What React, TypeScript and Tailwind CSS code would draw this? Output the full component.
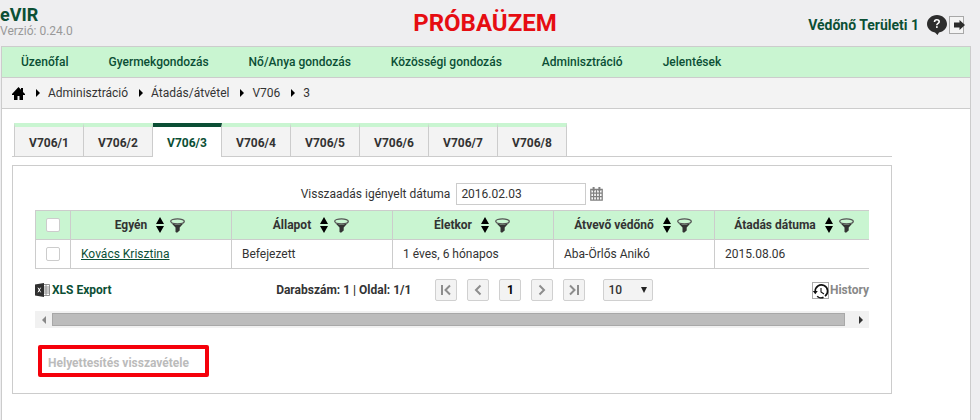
//dependencies
import { useState } from "react";

const menuItems = ["Üzenőfal", "Gyermekgondozás", "Nő/Anya gondozás", "Közösségi gondozás", "Adminisztráció", "Jelentések"];
const breadcrumbs = ["Adminisztráció", "Átadás/átvétel", "V706", "3"];
const tabs = ["V706/1", "V706/2", "V706/3", "V706/4", "V706/5", "V706/6", "V706/7", "V706/8"];
const columns = ["Egyén", "Állapot", "Életkor", "Átvevő védőnő", "Átadás dátuma"];
const rows = [
    { name: "Kovács Krisztina", status: "Befejezett", age: "1 éves, 6 hónapos", nurse: "Aba-Örlős Anikó", date: "2015.08.06" },
];

function HelpIcon() {
    return (
        <svg width="20" height="20" viewBox="0 0 20 20">
            <path d="M10 0C4.500 0 0 4 0 9c0 4.300 3.500 7.700 8 8.500l2.500 2.500 1.500-2.500c4.600-.8 8-4.200 8-8.500 0-5-4.500-9-10-9z" fill="#2d2d2d" />
            <path d="M7.500 7c0-1.500 1.100-2.200 2.300-2.200s2.400.7 2.400 2c0 1.600-2.400 1.700-2.400 3.400" fill="none" stroke="#fff" strokeWidth="1.600" />
            <rect x="9" y="11.200" width="1.700" height="1.700" fill="#fff" />
        </svg>
    )
}

function LogoutIcon() {
    return (
        <svg width="17" height="18" viewBox="0 0 17 18">
            <rect x=".5" y=".5" width="14" height="17" fill="#f4f4f4" stroke="#a8a8a8" />
            <path d="M5 6.500h5.500V4l5.500 5-5.500 5v-2.500H5z" fill="#2b2b2b" />
        </svg>
    )
}

function HomeIcon() {
    return (
        <svg width="13" height="13" viewBox="0 0 13 13">
            <path d="M6.500 0L0 7v1h2v5h3.500V9h2v4H11V8h2V7l-2-2.100V1H9v1.700z" fill="#000" />
        </svg>
    )
}

function CrumbArrow() {
    return (
        <svg width="4" height="8" viewBox="0 0 4 8">
            <path d="M0 0l4 4-4 4z" fill="#000" />
        </svg>
    )
}

function SortIcon() {
    return (
        <svg width="8" height="16" viewBox="0 0 8 16">
            <path d="M4 0l4 7H0zM4 16l4-7H0z" fill="#000" />
        </svg>
    )
}

function FilterIcon() {
    return (
        <svg width="15" height="15" viewBox="0 0 15 15">
            <path d="M.8 4.500L5.500 9.500V14l1.500.8 2.700-2.300v-3l4.500-5C12.500 6 10 6.500 7.500 6.500S2.500 6 .8 4.500z" fill="#333" />
            <ellipse cx="7.500" cy="3.300" rx="6.800" ry="2.500" fill="none" stroke="#555" strokeWidth="1.300" />
        </svg>
    )
}

function CalendarIcon() {
    return (
        <svg width="13" height="14" viewBox="0 0 13 14">
            <path d="M.8 2.500h11.400v10.700H.8zM.8 6.200h11.400M.8 9.700h11.400M3.600 2.500v10.700M6.500 2.500v10.700M9.400 2.500v10.700" fill="none" stroke="#808080" strokeWidth="1.300" />
            <path d="M3.600 0v4M9.400 0v4" stroke="#808080" strokeWidth="2" />
        </svg>
    )
}

function XlsIcon() {
    return (
        <svg width="15" height="14" viewBox="0 0 15 14">
            <path d="M8 1.500h6.500v11H8M8 4h6.500M8 6h6.500M8 8h6.500M8 10h6.500M11 1.500v11" fill="none" stroke="#888" strokeWidth=".9" />
            <path d="M0 1.500L9 0v14l-9-1.500z" fill="#2f2f2f" />
            <path d="M3 4.700l2.600 4.600M5.600 4.700L3 9.300" stroke="#fff" strokeWidth="1" />
        </svg>
    )
}

function HistoryIcon() {
    return (
        <svg width="17" height="17" viewBox="0 0 17 17">
            <rect x=".5" y=".5" width="16" height="16" fill="#fff" stroke="#aaa" />
            <path d="M3.200 9.500A6.200 6.200 0 1 1 13 14.200M5.200 14.200c1.500 1.600 4.500 2 6.300 1" fill="none" stroke="#111" strokeWidth="1.600" />
            <path d="M.8 9h5l-2.500 3.200z" fill="#111" />
            <path d="M9 6v4l3 2" fill="none" stroke="#111" strokeWidth="1.100" />
        </svg>
    )
}

function PagerButton({ label, path }: { label: string, path: string }) {
    return (
        <button aria-label={label} className="flex h-[22px] w-[22px] items-center justify-center rounded-xs border border-[#d0d0d0] bg-[#f3f3f3]">
            <svg width="12" height="12" viewBox="0 0 12 12">
                <path d={path} fill="none" stroke="#8d8d8d" strokeWidth="2" />
            </svg>
        </button>
    )
}

export default function App() {
    const [activeTab, setActiveTab] = useState("V706/3");
    const [date, setDate] = useState("2016.02.03");

    return (
        <div className="flex min-h-screen flex-col bg-[#eeeef0] font-['Roboto',sans-serif] text-[12px] text-[#333]">
            <header className="grid h-[46px] grid-cols-3">
                <div className="pt-1.5">
                    <h1 className="text-[18px] leading-[18px] font-bold text-[#0b4f35]">eVIR</h1>
                    <p className="leading-[14px] text-[#999]">Verzió: 0.24.0</p>
                </div>
                <p className="pt-1 pr-2.5 text-center text-[24px] leading-[38px] font-bold text-[#e60d12]">PRÓBAÜZEM</p>
                <div className="flex items-center justify-end pt-1 pr-[14px]">
                    <span className="mr-2 text-[14px] font-bold text-[#0b4f35]">Védőnő Területi 1</span>
                    <button aria-label="Súgó" className="mr-0.5"><HelpIcon /></button>
                    <button aria-label="Kilépés"><LogoutIcon /></button>
                </div>
            </header>

            <div className="mr-[9px] ml-px flex flex-1 flex-col border-x border-t border-[#ccc] bg-white">
                <nav className="flex h-[31px] items-center gap-10 border-b border-[#ccc] bg-[#c9f5d1] pl-[19px]">
                    {menuItems.map(item => <a key={item} href="#" className="font-medium text-[#0b4f35]">{item}</a>)}
                </nav>

                <nav className="flex h-[31px] items-center border-b border-[#ccc] bg-[#f3f3f3] pl-2.5" aria-label="Útvonal">
                    <a href="#" aria-label="Kezdőlap"><HomeIcon /></a>
                    {breadcrumbs.map(crumb => (
                        <span key={crumb} className="flex items-center">
                            <span className="mr-2 ml-[11px]"><CrumbArrow /></span>
                            <a href="#">{crumb}</a>
                        </span>
                    ))}
                </nav>

                <main className="mr-[78px] ml-2.5 pt-3.5">
                    <div role="tablist" className="flex border-b border-[#ccc] pl-0.5">
                        {tabs.map(tab => (
                            <button
                                key={tab}
                                role="tab"
                                aria-selected={tab === activeTab}
                                onClick={() => setActiveTab(tab)}
                                className={tab === activeTab
                                    ? "-mb-px h-[34px] w-[69px] border-t-4 border-r border-t-[#0b4f35] border-r-[#ccc] bg-white pt-0.5 font-bold text-[#0b4f35]"
                                    : "h-[33px] w-[69px] border-t-4 border-r border-t-[#c9f5d1] border-r-[#ccc] bg-[#f3f3f3] pt-0.5 font-bold first:w-[70px] first:border-l first:border-l-[#ccc]"}
                            >
                                {tab}
                            </button>
                        ))}
                    </div>

                    <section className="mt-2 border border-[#ccc] px-[22px] pt-[17px] pb-4">
                        <div className="flex items-center justify-center">
                            <label htmlFor="date" className="mr-1.5">Visszaadás igényelt dátuma</label>
                            <input id="date" value={date} onChange={e => setDate(e.target.value)} className="h-[22px] w-[130px] border border-[#ccc] bg-white px-1" />
                            <button aria-label="Naptár" className="ml-1"><CalendarIcon /></button>
                        </div>

                        <div className="mt-[5px] overflow-hidden">
                            <table className="w-[841px] table-fixed border-collapse">
                                <thead>
                                    <tr className="h-[29px] bg-[#c9f5d1]">
                                        <th className="w-[35px] border border-[#ccc]">
                                            <input type="checkbox" aria-label="Összes kijelölése" className="mx-auto block h-3.5 w-3.5 appearance-none rounded-xs border border-[#ccc] bg-white" />
                                        </th>
                                        {columns.map(column => (
                                            <th key={column} className="border border-[#ccc] p-0 pr-0.5">
                                                <div className="flex items-center justify-center">
                                                    <span className="font-bold">{column}</span>
                                                    <button aria-label={`Rendezés: ${column}`} className="mr-1.5 ml-[9px]"><SortIcon /></button>
                                                    <button aria-label={`Szűrés: ${column}`}><FilterIcon /></button>
                                                </div>
                                            </th>
                                        ))}
                                    </tr>
                                </thead>
                                <tbody>
                                    {rows.map(row => (
                                        <tr key={row.name} className="h-[29px]">
                                            <td className="border border-[#ccc]">
                                                <input type="checkbox" aria-label={row.name} className="mx-auto block h-3.5 w-3.5 appearance-none rounded-xs border border-[#ccc] bg-white" />
                                            </td>
                                            <td className="border border-[#ccc] px-2.5"><a href="#" className="text-[#0b4f35] underline">{row.name}</a></td>
                                            <td className="border border-[#ccc] px-2.5">{row.status}</td>
                                            <td className="border border-[#ccc] px-2.5">{row.age}</td>
                                            <td className="border border-[#ccc] px-2.5">{row.nurse}</td>
                                            <td className="border border-[#ccc] px-2.5">{row.date}</td>
                                        </tr>
                                    ))}
                                </tbody>
                            </table>
                        </div>

                        <div className="mt-2.5 flex items-center justify-between font-bold">
                            <button className="flex items-center gap-0.5 text-[#0b4f35]"><XlsIcon />XLS Export</button>
                            <div className="flex items-center gap-2.5 pl-1.5">
                                <span className="mr-3.5">Darabszám: 1 | Oldal: 1/1</span>
                                <PagerButton label="Első oldal" path="M2 1v10M10 1.500L5.500 6l4.500 4.500" />
                                <PagerButton label="Előző oldal" path="M8.500 1.500L4 6l4.500 4.500" />
                                <button className="h-[22px] w-[22px] rounded-xs border border-[#d0d0d0] bg-[#f3f3f3] text-black">1</button>
                                <PagerButton label="Következő oldal" path="M3.500 1.500L8 6l-4.500 4.500" />
                                <PagerButton label="Utolsó oldal" path="M10 1v10M2 1.500L6.500 6 2 10.500" />
                                <div className="relative ml-2">
                                    <select aria-label="Sorok száma" defaultValue="10" className="h-[22px] w-[50px] appearance-none rounded-xs border border-[#d0d0d0] bg-[#f3f3f3] px-1 font-medium">
                                        <option>10</option>
                                        <option>20</option>
                                        <option>50</option>
                                    </select>
                                    <svg width="6" height="6" viewBox="0 0 6 6" className="pointer-events-none absolute top-2 right-1.5">
                                        <path d="M0 0h6L3 6z" fill="#222" />
                                    </svg>
                                </div>
                            </div>
                            <button className="flex items-center gap-px text-[#888]"><HistoryIcon />History</button>
                        </div>

                        <div className="mt-2.5 flex h-[17px] items-center bg-[#f1f1f1]">
                            <button aria-label="Görgetés balra" className="flex w-[17px] justify-center">
                                <svg width="4" height="8" viewBox="0 0 4 8"><path d="M4 0v8L0 4z" fill="#888" /></svg>
                            </button>
                            <div className="mr-[7px] h-[13px] flex-1 border border-[#a8a8a8] bg-[#bcbcbc]"></div>
                            <button aria-label="Görgetés jobbra" className="flex w-[17px] justify-center">
                                <svg width="4" height="8" viewBox="0 0 4 8"><path d="M0 0v8l4-4z" fill="#333" /></svg>
                            </button>
                        </div>

                        <div className="mt-[17px] ml-[3px] flex h-8 w-[171px] items-center rounded-xs border-4 border-[#f5000a] px-1.5 pt-1">
                            <button disabled className="font-bold text-[#bbb]">Helyettesítés visszavétele</button>
                        </div>
                    </section>
                </main>
            </div>
        </div>
    )
}
